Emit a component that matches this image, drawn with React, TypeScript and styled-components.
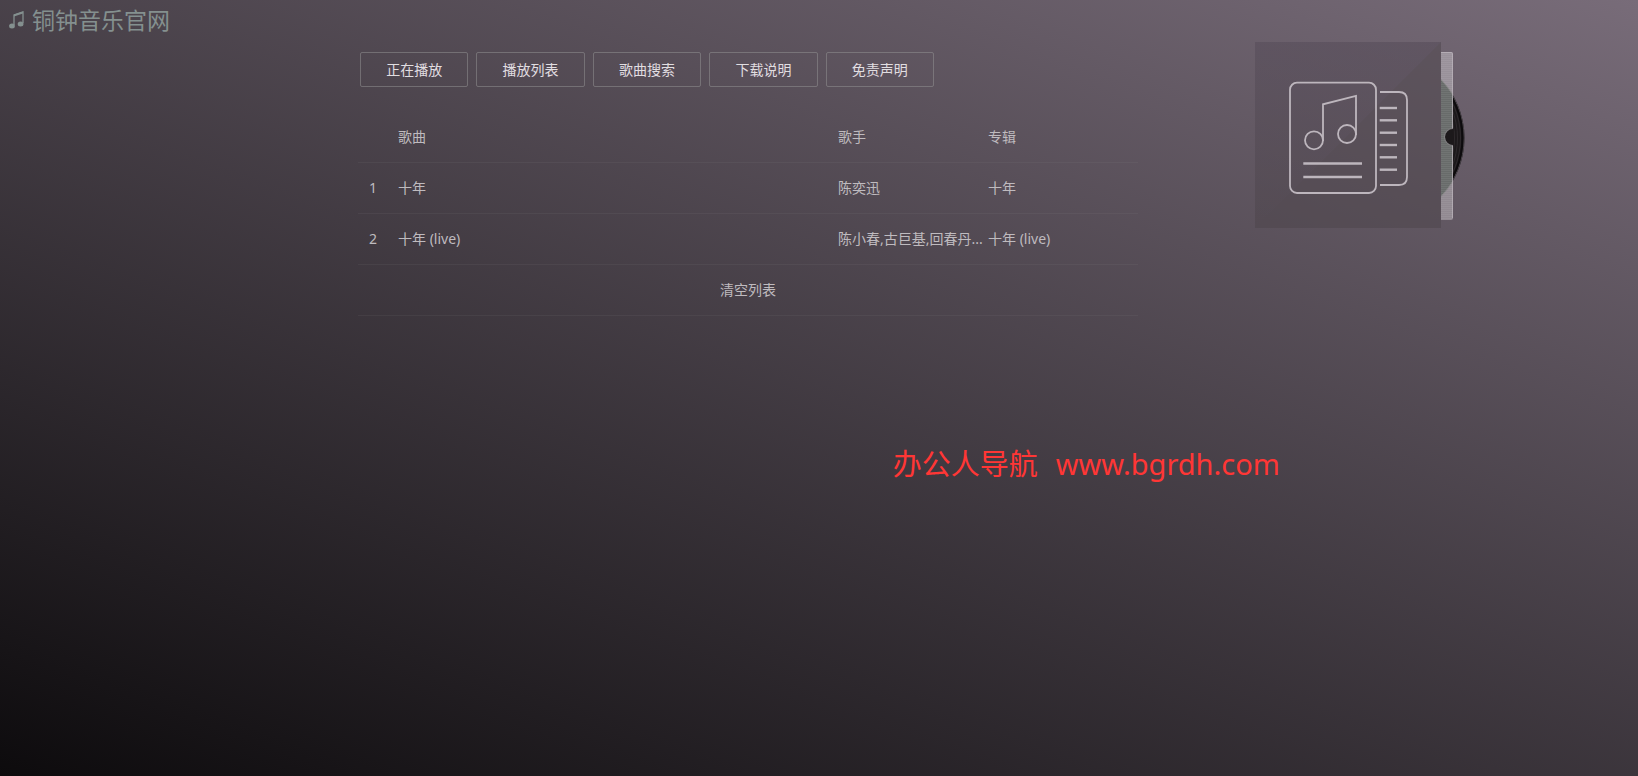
import React from "react";
import styled, { createGlobalStyle } from "styled-components";

const GlobalStyle = createGlobalStyle`
  *, *::before, *::after {
    box-sizing: border-box;
  }
  html {
    min-height: 100%;
    background: linear-gradient(20deg, #0d0b0d, #786c79) no-repeat;
    background-attachment: fixed;
  }
  body {
    margin: 0;
    color: #bfbbbf;
    font: 14px/20px "Noto Sans", "Noto Sans CJK SC", sans-serif;
  }
`;

const Page = styled.div`
  min-height: 100vh;
`;

const Header = styled.header`
  display: flex;
  align-items: center;
  gap: 8px;
  height: 40px;
  padding-left: 9px;
  color: #84908f;
`;

const Title = styled.h1`
  margin: 0;
  font-size: 23px;
  line-height: 32px;
  font-weight: 400;
`;

const Main = styled.main`
  display: grid;
  grid-template-columns: 358fr 780fr 500fr;
  align-items: start;
`;

const Content = styled.section`
  grid-column: 2;
  padding-top: 12px;
`;

const Nav = styled.nav`
  display: grid;
  grid-template-columns: repeat(5, 1fr);
  gap: 8px;
  max-width: 576px;
  margin-bottom: 25px;
  padding-left: 2px;
`;

const NavButton = styled.button`
  height: 35px;
  padding: 0;
  border: 1px solid rgba(150, 150, 150, 0.5);
  border-radius: 2px;
  background: transparent;
  color: #e1dee1;
  font: inherit;
  cursor: pointer;
`;

const SongTable = styled.table`
  width: 100%;
  border-collapse: separate;
  border-spacing: 0;
  table-layout: fixed;
`;

const Cell = styled.td<{ $center?: boolean }>`
  height: 51px;
  padding: 0;
  border-bottom: 1px solid rgba(150, 150, 150, 0.1);
  font-weight: 400;
  text-align: ${(p) => (p.$center ? "center" : "left")};
  white-space: nowrap;
  overflow: hidden;
`;

const NumberCell = styled(Cell)`
  padding-right: 10px;
`;

const Col = styled.col<{ $width?: number }>`
  width: ${(p) => (p.$width ? `${p.$width}px` : "auto")};
`;

const ClearButton = styled.button`
  padding: 0;
  border: 0;
  background: none;
  color: inherit;
  font: inherit;
  cursor: pointer;
`;

const Aside = styled.aside`
  padding: 2px 0 0 117px;
`;

const AlbumArt = styled.svg`
  display: block;
`;

const Watermark = styled.p`
  display: flex;
  gap: 18px;
  margin: 0;
  padding: 128px 0 0 54.5%;
  color: #ff3635;
  font-size: 29px;
  line-height: 40px;
  white-space: nowrap;
`;

const NoteIcon = () => (
  <svg width="15" height="18" viewBox="0 0 15 18" aria-hidden="true">
    <path
      d="M5 14V4L14 1V12"
      fill="none"
      stroke="currentColor"
      strokeWidth="1.3"
    />
    <path d="M5 3.6L14 0.6V2.6L5 5.4Z" fill="currentColor" />
    <ellipse cx="3" cy="15" rx="2.9" ry="2.5" fill="currentColor" />
    <ellipse cx="11.600" cy="13" rx="2.9" ry="2.5" fill="currentColor" />
  </svg>
);

const ticks = [66, 78.3, 90.7, 103, 115.3, 127.7];
const grooves = [81, 78, 75, 72, 69];

const AlbumCover = () => (
  <AlbumArt width="210" height="186" viewBox="0 0 210 186" role="img" aria-label="专辑封面">
    <defs>
      <clipPath id="outside">
        <rect x="186" y="0" width="24" height="186" />
      </clipPath>
      <linearGradient id="gloss" x1="0" y1="0" x2="0" y2="1">
        <stop offset="0" stopColor="#6a5d74" stopOpacity="0.25" />
        <stop offset="1" stopColor="#6a5d74" stopOpacity="0" />
      </linearGradient>
      <linearGradient id="sleeve" x1="0" y1="0" x2="0" y2="1">
        <stop offset="0" stopColor="#9a929b" />
        <stop offset="1" stopColor="#918991" />
      </linearGradient>
      <pattern id="stripes" width="3" height="2" patternUnits="userSpaceOnUse">
        <rect width="3" height="1" fill="#ffffff" fillOpacity="0.06" />
      </pattern>
    </defs>
    <g clipPath="url(#outside)">
      <circle cx="124.500" cy="96" r="85" fill="#1c191b" />
      <circle cx="124.500" cy="96" r="84.500" fill="none" stroke="#4c464c" />
      <circle cx="124.500" cy="96" r="83" fill="none" stroke="#0d0b0d" strokeWidth="2" />
      {grooves.map((r) => (
        <circle key={r} cx="124.500" cy="96" r={r} fill="none" stroke="#2e2a2d" />
      ))}
      <path d="M186 10H196Q198 10 198 12V176Q198 178 196 178H186Z" fill="url(#sleeve)" />
      <path d="M186 37.500Q193 45 198 53V139Q193 147 186 154.500Z" fill="#686b6a" />
      <path d="M186 37.500Q193 45 198 53M198 139Q193 147 186 154.500" fill="none" stroke="#858585" />
      <path d="M186 10H198V178H186Z" fill="url(#stripes)" />
      <path d="M186 10.500H196Q197.500 10.500 197.500 12V176" fill="none" stroke="#bdb6bd" strokeOpacity="0.7" />
      <path d="M198.500 86.500A8.500 8.500 0 0 0 198.500 103.500Z" fill="#1c191b" />
      <path d="M198 86.500A8.500 8.500 0 0 0 198 103.500" fill="none" stroke="#918c91" strokeWidth="0.6" />
    </g>
    <rect width="186" height="186" fill="#4c434a" fillOpacity="0.5" />
    <path d="M0 0H186L0 186Z" fill="url(#gloss)" />
    <g fill="none" stroke="#bdb6bd" strokeWidth="1.8">
      <rect x="35" y="40.700" width="86" height="110.300" rx="7" />
      <path d="M125 50H144Q152 50 152 58V135Q152 143 144 143H125" />
      <circle cx="59" cy="98.300" r="9" />
      <circle cx="92" cy="92" r="9" />
      <path d="M68 99V62.300L101 54V93" />
      <path d="M48.300 121.500H107M48.300 135H107" strokeWidth="2.4" />
      {ticks.map((y) => (
        <path key={y} d={`M124.700 ${y}H142`} strokeWidth="2.4" />
      ))}
    </g>
  </AlbumArt>
);

const sections = ["正在播放", "播放列表", "歌曲搜索", "下载说明", "免责声明"];

const songs = [
  { name: "十年", singer: "陈奕迅", album: "十年" },
  { name: "十年 (live)", singer: "陈小春,古巨基,回春丹...", album: "十年 (live)" },
];

export default function App() {
  return (
    <Page>
      <GlobalStyle />
      <Header>
        <NoteIcon />
        <Title>铜钟音乐官网</Title>
      </Header>
      <Main>
        <Content>
          <Nav>
            {sections.map((label) => (
              <NavButton key={label} type="button">
                {label}
              </NavButton>
            ))}
          </Nav>
          <SongTable>
            <colgroup>
              <Col $width={40} />
              <Col />
              <Col $width={150} />
              <Col $width={150} />
            </colgroup>
            <thead>
              <tr>
                <Cell />
                <Cell as="th" scope="col">歌曲</Cell>
                <Cell as="th" scope="col">歌手</Cell>
                <Cell as="th" scope="col">专辑</Cell>
              </tr>
            </thead>
            <tbody>
              {songs.map((song, i) => (
                <tr key={song.name}>
                  <NumberCell $center>{i + 1}</NumberCell>
                  <Cell>{song.name}</Cell>
                  <Cell>{song.singer}</Cell>
                  <Cell>{song.album}</Cell>
                </tr>
              ))}
              <tr>
                <Cell colSpan={4} $center>
                  <ClearButton type="button">清空列表</ClearButton>
                </Cell>
              </tr>
            </tbody>
          </SongTable>
        </Content>
        <Aside>
          <AlbumCover />
        </Aside>
      </Main>
      <Watermark>
        <span>办公人导航</span>
        <span>www.bgrdh.com</span>
      </Watermark>
    </Page>
  );
}
